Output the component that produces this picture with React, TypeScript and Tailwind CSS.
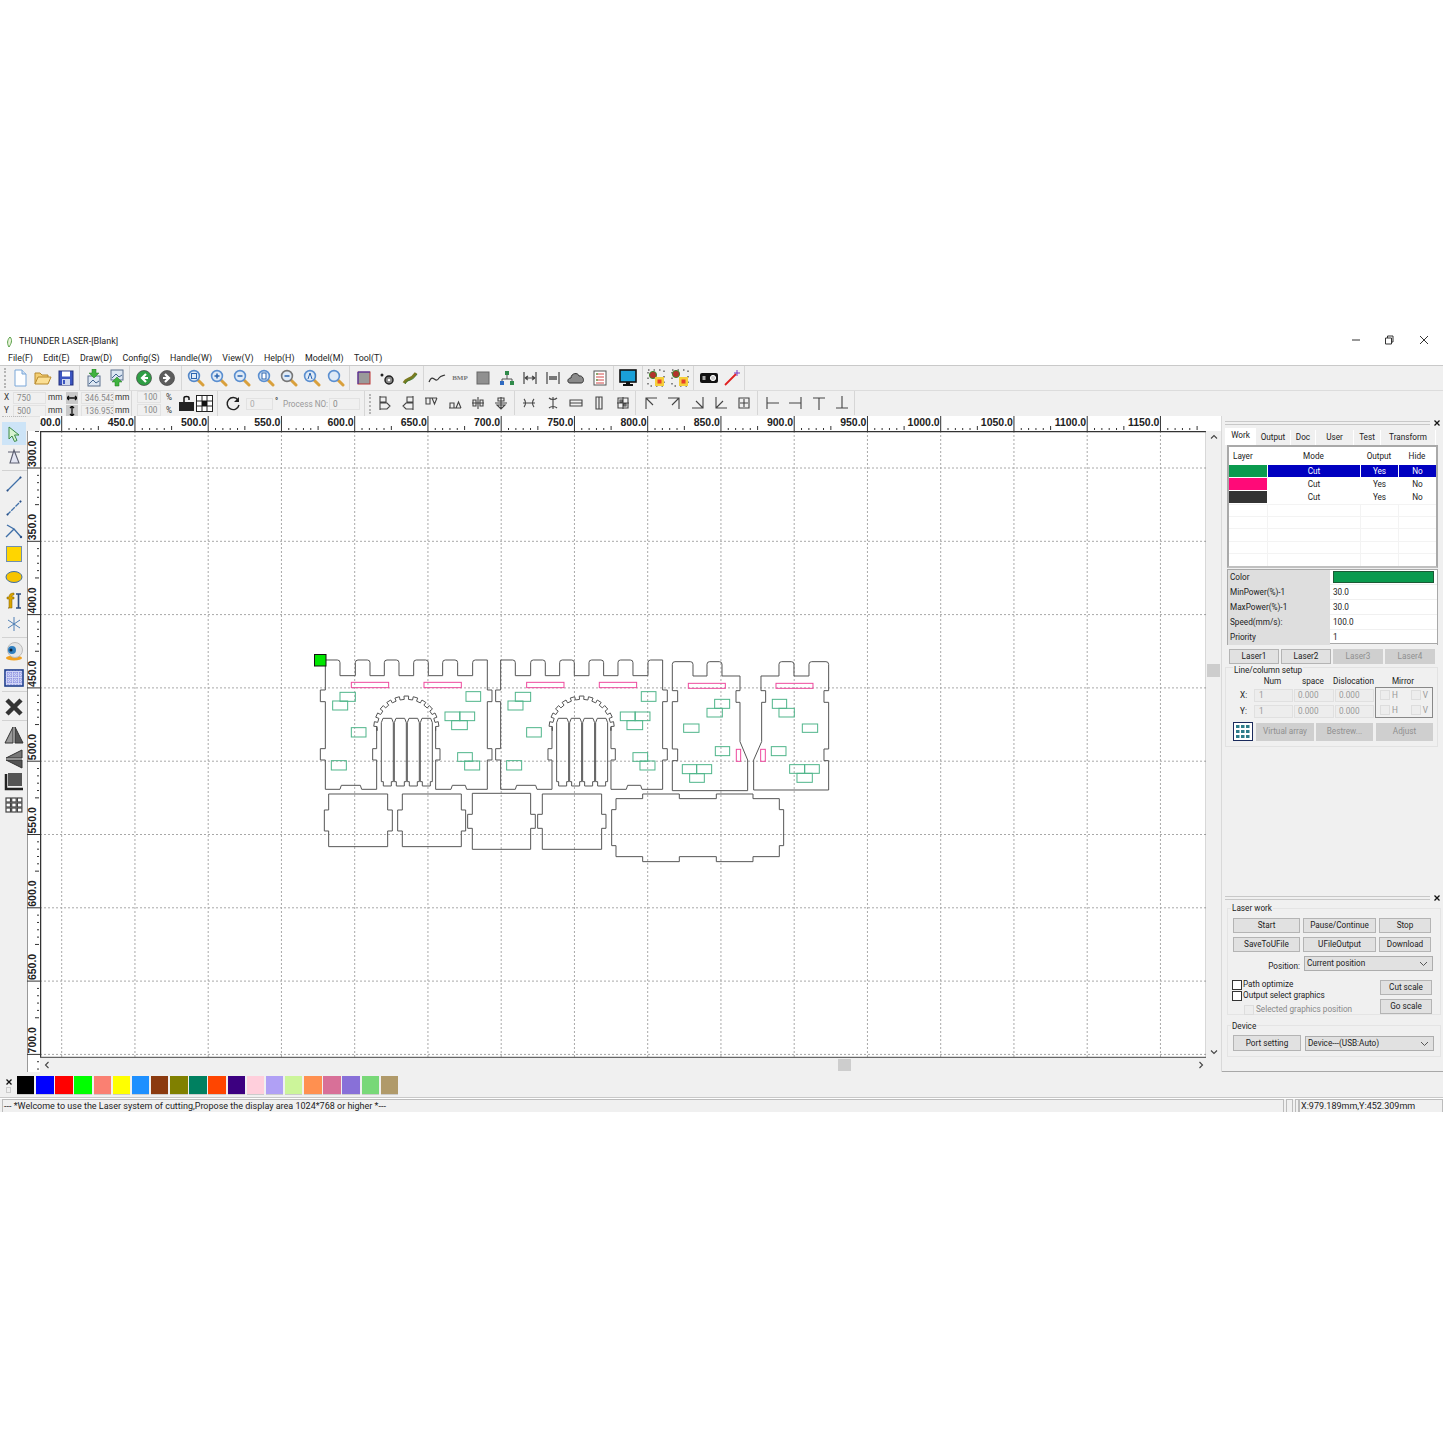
import React from "react";

type P = { children?: React.ReactNode };
const S = ({ children, s = 18 }: P & { s?: number }) => (
  <svg width={s} height={s} viewBox="0 0 18 18" className="block">{children}</svg>
);

const Lens = ({ sym, tint = "#5b8fd0" }: { sym?: React.ReactNode; tint?: string }) => (
  <S>
    <path d="M10.5 10.5 L16 16" stroke="#d9a03c" strokeWidth="3" strokeLinecap="round" />
    <circle cx="7" cy="7" r="5.4" fill="#dfeaf6" stroke={tint} strokeWidth="1.6" />
    {sym}
  </S>
);
const plus = <path d="M4.5 7H9.5M7 4.5V9.5" stroke="#2a64b0" strokeWidth="1.5" />;
const minus = <path d="M4.5 7H9.5" stroke="#2a64b0" strokeWidth="1.5" />;

const ArrowDoc = ({ up }: { up?: boolean }) => (
  <S>
    <rect x="3" y={up ? 1 : 7} width="12" height="10" fill="#dce6f2" stroke="#5a6f8c" />
    <path d={up ? "M4 9 L8 5 L11 8 L14 6" : "M4 15 L8 11 L11 14 L14 12"} stroke="#44658f" fill="none" />
    <path d={up ? "M9 8 L14 13 H11 V17 H7 V13 H4Z" : "M7 0 H11 V4 H14 L9 9 L4 4 H7Z"} fill="#3fb23f" stroke="#1f7a1f" strokeWidth=".5" />
  </S>
);

const Circ = ({ fill, d }: { fill: string; d: string }) => (
  <S>
    <circle cx="9" cy="9" r="7.5" fill={fill} stroke="#444" strokeWidth=".7" />
    <path d={d} stroke="#fff" strokeWidth="2.2" fill="none" />
  </S>
);

const Sparks = ({ flip }: { flip?: boolean }) => (
  <S>
    <rect x="1" y="1" width="16" height="16" fill="none" stroke="#222" strokeDasharray="1.5 4" />
    <circle cx={flip ? 5 : 6} cy={flip ? 5 : 6} r="3.6" fill="#b2332b" stroke="#3c8a2e" />
    <rect x="8" y="8" width="9" height="9" fill="#f5cf3a" />
    <rect x="10.5" y="10.5" width="4" height="4" fill="#e8402a" />
  </S>
);

const line = (d: string, w = 1.3, c = "#444") => (
  <S><path d={d} fill="none" stroke={c} strokeWidth={w} /></S>
);

const tb1: React.ReactNode[][] = [
  [
    <S><path d="M4 1H11L15 5V17H4Z" fill="#fdfeff" stroke="#7aa7d8" /><path d="M11 1V5H15" fill="#cfe0f3" stroke="#7aa7d8" /></S>,
    <S><path d="M1 15V4H6L8 6H14V8" fill="#f4cf74" stroke="#b88a2c" /><path d="M1 15L4 8H17L14 15Z" fill="#fbdf94" stroke="#b88a2c" /></S>,
    <S><rect x="2" y="2" width="14" height="14" fill="#3c55c0" stroke="#22307c" /><rect x="5" y="2.5" width="8" height="5" fill="#fff" /><rect x="5" y="10" width="8" height="6" fill="#cfd8ee" /><rect x="6" y="11" width="2" height="4" fill="#3c55c0" /></S>,
  ],
  [<ArrowDoc />, <ArrowDoc up />],
  [
    <Circ fill="#2f9e44" d="M11 5 L7 9 L11 13 M7 9 H13" />,
    <Circ fill="#5c5c5c" d="M7 5 L11 9 L7 13 M11 9 H5" />,
  ],
  [
    <Lens sym={<rect x="4.5" y="4.5" width="5" height="5" fill="none" stroke="#2a64b0" />} tint="#5588c8" />,
    <Lens sym={plus} />,
    <Lens sym={minus} />,
    <Lens sym={<rect x="5" y="4" width="4" height="6" fill="#fff" stroke="#2a64b0" />} />,
    <Lens sym={minus} tint="#777" />,
    <Lens sym={<path d="M5 10 L7 4 L9 10" stroke="#2a64b0" fill="none" />} />,
    <Lens />,
  ],
  [
    <S><rect x="3" y="3" width="12" height="12" fill="#9a9a9a" stroke="#b33" /><path d="M3 15V3H15" fill="none" stroke="#33b" /></S>,
    <S><circle cx="11" cy="11" r="4" fill="#888" stroke="#222" strokeWidth="1.5" /><circle cx="11" cy="11" r="1.3" fill="#fff" /><circle cx="4" cy="6" r="1.5" fill="#222" /></S>,
    <S><path d="M3 14C6 8 9 13 15 4" stroke="#7a7a20" strokeWidth="3" fill="none" /><path d="M4 15C7 9 10 14 16 5" stroke="#3a7a30" strokeWidth="1" fill="none" /></S>,
  ],
  [
    <S><path d="M1 13C5 3 7 16 11 9 C13 6 15 7 17 6" stroke="#333" strokeWidth="1.2" fill="none" /></S>,
    <span className="font-bold text-[7px] leading-none text-[#777] [font-family:'Liberation_Serif',serif]">BMP</span>,
    <S><rect x="3" y="3" width="12" height="12" fill="#909090" stroke="#666" /></S>,
    <S><path d="M9 5V10M4 13V10H14V13" stroke="#555" fill="none" /><rect x="7" y="2" width="4" height="4" fill="#2f8a4a" /><rect x="2" y="12" width="4" height="4" fill="#2f6ac0" /><rect x="12" y="12" width="4" height="4" fill="#2f8a4a" /></S>,
    line("M3 3V15M15 3V15M4 9H14M4 9L7 7M4 9L7 11M14 9L11 7M14 9L11 11M6 7V11M12 7V11", 1.2),
    <S><path d="M3 3V15M15 3V15" stroke="#444" strokeWidth="1.2" /><rect x="5" y="7" width="8" height="4" fill="#777" /></S>,
    <S><path d="M3 14C0 14 0 9 4 9C4 4 11 3 12 7C17 6 18 14 14 14Z" fill="#8a8a8a" stroke="#333" /></S>,
    <S><rect x="3" y="2" width="12" height="14" fill="#fff" stroke="#555" /><path d="M5 5H13M5 8H13M5 11H13M5 14H13" stroke="#c33" strokeWidth=".9" /><path d="M5 5H7M5 11H7" stroke="#3a3" strokeWidth="1" /></S>,
  ],
  [
    <svg width="20" height="20" viewBox="0 0 20 20" className="block"><rect x="2" y="2" width="16" height="12" fill="#1aa0d8" stroke="#111" strokeWidth="1.6" /><path d="M8 14H12V16H15V18H5V16H8Z" fill="#111" /></svg>,
  ],
  [<Sparks />, <Sparks flip />],
  [
    <svg width="20" height="20" viewBox="0 0 20 20" className="block"><rect x="1" y="5" width="18" height="10" rx="2" fill="#111" /><circle cx="14" cy="10" r="2.6" fill="#ccc" stroke="#fff" /><rect x="3.5" y="8" width="3" height="4" fill="#aaa" /></svg>,
    <S><path d="M2 16L13 5" stroke="#e02020" strokeWidth="1.8" /><path d="M14 1V7M11 4H17" stroke="#7a3ac0" strokeWidth="1" /></S>,
  ],
];

const tb2: string[][] = [
  ["M4 2V16M4 3H10V8H4M4 9H11L14 12L11 15H4", "M14 2V16M14 3H8V8H14M14 9H7L4 12L7 15H14", "M3 4H15M4 4V10H8V4M10 4L12.5 10L15 4", "M3 14H15M4 14V9H8V14M10 14L12.5 8L15 14", "M9 3V15M4 6H7V12H4ZM11 6H14V12H11ZM3 9H15", "M3 9H15M9 3V15M6 4H12V7H6ZM5 11L9 15L13 11Z"],
  ["M3 9H15M4 5C6 7 6 11 4 13M14 5C12 7 12 11 14 13", "M9 3V15M5 4C7 6 11 6 13 4M5 14C7 12 11 12 13 14", "M3 6H15V12H3ZM3 9H15", "M6 3H12V15H6ZM9 3V15", "M4 4H14V14H4ZM9 3V15M3 9H15M6 6H8V8H6ZM10 10H12V12H10Z"],
  ["M4 15V4H15M4 4L11 11M4 4H7M4 4V7", "M14 15V4H3M14 4L7 11M14 4H11M14 4V7", "M14 3V14H3M14 14L7 7M14 14H11M14 14V11", "M4 3V14H15M4 14L11 7M4 14H7M4 14V11", "M4 4H14V14H4ZM9 5V13M5 9H13"],
  ["M4 3V15M4 9H16", "M14 3V15M2 9H14", "M3 4H15M9 4V16", "M3 14H15M9 2V14"],
];

const TbCell = ({ children }: P) => (
  <div className="w-[23.3px] h-[24px] flex items-center justify-center shrink-0">{children}</div>
);
const TbGroup = ({ children, cls }: P & { cls: string }) => (
  <div className={`flex items-center h-[24px] border-r border-[#d6d6d6] ${cls}`}>{children}</div>
);
const Grip = () => <div className="w-[2px] h-[20px] mx-[2px] border-l-2 border-dotted border-[#b5b5b5]" />;

const Box = ({ v, w, cls = "" }: { v: string; w: string; cls?: string }) => (
  <div className={`h-[12px] bg-[#f0f0f0] border border-[#e2e2e2] pl-[3px] leading-[10px] text-[#888] overflow-hidden whitespace-nowrap ${w} ${cls}`}>{v}</div>
);

const Toolbar1 = () => {
  const pads = ["pr-[1px] mr-[2px]", "pr-[1px] mr-[2px]", "pr-[2px] mr-[2px]", "pr-[2px] mr-[2px]", "pr-[1px] mr-[1px]", "pr-[2px] mr-[2px]", "pr-[2px] mr-[2px]", "pr-[2px] mr-[3px]", "pr-0 mr-0"];
  return (
    <div className="h-[25px] flex items-center border-t border-[#c9c9c9] pl-[2px]">
      <Grip />
      {tb1.map((g, i) => (
        <TbGroup key={i} cls={pads[i]}>
          {g.map((c, j) => <TbCell key={j}>{c}</TbCell>)}
        </TbGroup>
      ))}
    </div>
  );
};

const Toolbar2 = () => (
  <div className="h-[26px] flex items-center border-t border-[#dcdcdc] text-[8.2px] text-[#333]">
    <div className="w-[132px] h-full flex flex-col justify-center gap-px pl-[4px] pt-px border-r border-[#d6d6d6] shrink-0">
      {[["X", "750", "346.543"], ["Y", "500", "136.953"]].map((r, i) => (
        <div key={i} className="flex items-center h-[12px]">
          <span className="w-[9px]">{r[0]}</span>
          <Box v={r[1]} w="w-[33px]" />
          <span className="w-[20px] pl-[2px] shrink-0">mm</span>
          <div className="w-[12px] h-[12px] bg-[#c9c9c9] flex items-center justify-center">
            <svg width="10" height="10" viewBox="0 0 10 10"><path d={i ? "M5 0V10M3 2L5 0L7 2M3 8L5 10L7 8" : "M0 5H10M2 3L0 5L2 7M8 3L10 5L8 7"} stroke="#111" strokeWidth="1.3" fill="none" /></svg>
          </div>
          <Box v={r[2]} w="w-[33px]" cls="ml-[3px]" />
          <span className="pl-[1px]">mm</span>
        </div>
      ))}
    </div>
    <div className="w-[86px] h-full flex items-center pl-[5px] border-r border-[#d6d6d6] shrink-0">
      <div className="flex flex-col gap-px">
        {[0, 1].map((i) => (
          <div key={i} className="flex items-center h-[12px]">
            <Box v="100" w="w-[24px]" cls="text-center" />
            <span className="pl-[5px] w-[17px]">%</span>
          </div>
        ))}
      </div>
      <svg width="17" height="17" viewBox="0 0 17 17" className="block"><path d="M6 7V3C6 1 11 1 11 3V5" stroke="#111" strokeWidth="1.5" fill="none" /><rect x="1" y="7" width="15" height="9" fill="#222" /></svg>
      <svg width="17" height="17" viewBox="0 0 17 17" className="ml-px block"><rect x=".5" y=".5" width="16" height="16" fill="#fff" stroke="#222" /><path d="M6 .5V16.5M11 .5V16.5M.5 6H16.5M.5 11H16.5" stroke="#222" /><rect x="6" y="6" width="5" height="5" fill="#111" /></svg>
    </div>
    <div className="h-full flex items-center pl-[7px] w-[147px] border-r border-[#d6d6d6] shrink-0">
      <svg width="16" height="16" viewBox="0 0 16 16" className="block"><path d="M13 4A6 6 0 1 0 14 9" stroke="#222" strokeWidth="1.4" fill="none" /><path d="M14 1V6H9Z" fill="#222" /></svg>
      <Box v="0" w="w-[27px]" cls="ml-[5px] text-[#aaa]" />
      <span className="pl-[2px] w-[10px] pb-[5px] font-bold">°</span>
      <span className="text-[#999] w-[46px] shrink-0 whitespace-nowrap pt-[2px]">Process NO:</span>
      <Box v="0" w="w-[31px]" />
    </div>
    <div className="pl-[2px] flex items-center"><Grip /></div>
    <div className="flex items-center pb-px">
      {tb2.map((g, i) => (
        <TbGroup key={i} cls={i === 3 ? "h-[24px]" : "pr-[1px] mr-[3px]"}>
          {g.map((d, j) => <TbCell key={j}>{line(d, 1.1)}</TbCell>)}
        </TbGroup>
      ))}
    </div>
  </div>
);

const H_TICKS = Array.from({ length: 16 }, (_, i) => ({ x: 61.7 + 73.25 * i, v: 400 + 50 * i }));
const V_TICKS = Array.from({ length: 9 }, (_, i) => ({ y: 468 + 73.3 * i, v: 300 + 50 * i }));
const RULER_FONT = "'Liberation Sans', sans-serif";

const HRuler = () => (
  <svg width="1181" height="15" viewBox="40 416 1181 15" className="block shrink-0">
    <rect x="40" y="416" width="1181" height="15" fill="#fff" />
    {H_TICKS.map((t) => (
      <g key={t.v}>
        <path d={`M${t.x} 416V431`} stroke="#333" />
        <text x={t.x - 1} y="426" textAnchor="end" fontSize="10.5" fontWeight="700" fill="#222" fontFamily={RULER_FONT}>{t.v.toFixed(1)}</text>
        {[1, 2, 3, 4, 5].map((k) => (
          <path key={k} d={`M${t.x + k * 7.33} ${k === 5 ? 426 : 428}V430`} stroke="#333" />
        ))}
      </g>
    ))}
  </svg>
);

const VRuler = () => (
  <svg width="13" height="641" viewBox="27 431 13 641" className="block shrink-0">
    <rect x="27" y="431" width="13" height="641" fill="#fff" />
    <path d="M27.5 431V1072" stroke="#999" />
    {[-1, ...V_TICKS.map((_, i) => i)].map((i) => {
      const y = 468 + 73.3 * i;
      return [1, 2, 3, 4, 5].map((k) => (
        <path key={`${i}-${k}`} d={`M${k === 5 ? 35 : 37} ${y + k * 7.33}H39`} stroke="#333" />
      ));
    })}
    {V_TICKS.map((t) => (
      <g key={t.v}>
        <path d={`M27 ${t.y}H40`} stroke="#333" />
        <text transform={`translate(36 ${t.y - 1}) rotate(-90)`} fontSize="10.5" fontWeight="700" fill="#222" fontFamily={RULER_FONT}>{t.v.toFixed(1)}</text>
      </g>
    ))}
  </svg>
);

const GREEN = "#4fb58a";
const PINK = "#ee4a9e";

const archPath = () => {
  const cx = 289, cy = 236, r1 = 88, r2 = 98;
  const n = 23;
  const a0 = -4, a1 = 184;
  let d = "";
  for (let i = 0; i <= n; i++) {
    const a = ((a0 + ((a1 - a0) * i) / n) * Math.PI) / 180;
    const odd = i % 2 === 1;
    const pts = odd ? [r1, r2] : [r2, r1];
    for (const r of i === 0 ? [r1] : i === n ? [r1] : pts) {
      d += `L${(cx + r * Math.cos(a)).toFixed(1)} ${(cy - r * Math.sin(a)).toFixed(1)}`;
    }
  }
  return d;
};

const WALL = `M46 30H82Q90 30 90 38V77H136V38Q136 30 144 30H172Q180 30 180 38V77H223V38Q223 30 231 30H259Q267 30 267 38V77H311V38Q311 30 319 30H347Q355 30 355 38V77H398V38Q398 30 406 30H435Q443 30 443 38V77H488V38Q488 30 496 30H532V120H546V155H532V296H546V330H532V418H470L466 406H427L423 418H377V330H390V296H377V232${archPath()}L200 232V296H188V330H200V418H155L151 406H94L90 418H46V330H31V296H46V155H31V120H46Z`;

const Bar = ({ x }: { x: number }) => (
  <path d={`M${x} 395V218L${x + 5} 205H${x + 31}L${x + 36} 218V395H${x + 30}V408H${x + 6}V395Z`} />
);

const Rects = ({ list, color }: { list: number[][]; color: string }) => (
  <g stroke={color} fill="none" strokeWidth="3">
    {list.map((r, i) => <rect key={i} x={r[0]} y={r[1]} width={r[2]} height={r[3]} />)}
  </g>
);

const Wall = () => (
  <g>
    <g fill="none" stroke="#555" strokeWidth="3">
      <path d={WALL} />
      {[214, 253, 292, 331].map((x) => <Bar key={x} x={x} />)}
    </g>
    <Rects color={PINK} list={[[124, 97, 112, 16], [342, 97, 112, 16]]} />
    <Rects color={GREEN} list={[[90, 127, 46, 27], [68, 153, 45, 27], [124, 233, 44, 28], [64, 332, 45, 28], [468, 125, 44, 29], [405, 186, 45, 26], [449, 186, 45, 26], [425, 212, 47, 27], [443, 308, 44, 26], [464, 333, 45, 27]]} />
  </g>
);

const Canvas = () => (
  <svg width="1166" height="627" viewBox="40 431 1166 627" className="block shrink-0">
    <rect x="40" y="431" width="1166" height="627" fill="#fff" />
    <g stroke="#a8a8a8" strokeDasharray="2 2">
      {H_TICKS.map((t) => <path key={t.v} d={`M${t.x} 431V1058`} />)}
      {V_TICKS.map((t) => <path key={t.v} d={`M40 ${t.y}H1206`} />)}
    </g>
    <path d="M40.5 1058V431.5H1206" fill="none" stroke="#333" strokeWidth="1.5" />
    <path d="M40 1057.5H1206.5V431" fill="none" stroke="#666" strokeWidth="1.5" />
    <g transform="translate(310 650) scale(0.3333)">
      <Wall />
      <g transform="translate(526 0)"><Wall /></g>
      <g fill="none" stroke="#555" strokeWidth="3">
        <path d="M56 432H233V480H247V543H233V590H56V543H43V480H56Z" />
        <path d="M277 432H454V480H467V543H454V590H277V543H263V480H277Z" />
        <path d="M487 430H662V493H676V535H662V598H487V535H473V493H487Z" />
        <path d="M697 432H875V493H888V535H875V598H697V535H683V493H697Z" />
      </g>
    </g>
    <g transform="translate(600 650) scale(0.3333)">
      <g fill="none" stroke="#555" strokeWidth="3">
        <path d="M48 446H128V432H238V446H349V432H459V446H538V479H551V587H538V620H459V635H349V620H238V635H128V620H48V587H35V479H48Z" />
        <path d="M225 35H271Q279 35 279 43V78H321V43Q321 35 329 35H358Q366 35 366 43V78H420V122H408V157H420V275L443 330V422H217V332H233V297H217V155H233V122H217V43Q217 35 225 35Z" />
        <path d="M483 78H537V43Q537 35 545 35H574Q582 35 582 43V78H627V43Q627 35 635 35H678Q686 35 686 43V122H672V157H686V297H672V332H686V420H461V330L485 275V157H497V122H483Z" />
      </g>
      <Rects color={PINK} list={[[265, 100, 111, 15], [409, 298, 13, 36], [528, 100, 111, 15], [482, 298, 14, 36]]} />
      <Rects color={GREEN} list={[[344, 148, 45, 27], [321, 175, 46, 26], [251, 222, 46, 25], [346, 290, 43, 27], [247, 344, 43, 27], [290, 344, 45, 27], [269, 371, 44, 26], [517, 148, 43, 27], [537, 175, 46, 26], [607, 222, 46, 25], [514, 290, 44, 27], [569, 344, 45, 26], [614, 344, 44, 26], [591, 370, 46, 27]]} />
    </g>
    <rect x="314.5" y="654.5" width="11.5" height="11.5" fill="#00e600" stroke="#111" />
  </svg>
);

const leftIcons: { el: React.ReactNode; cls?: string; active?: boolean }[] = [
  { active: true, el: <S><path d="M4 2L14 10H9.5L12 15.5L9.5 16.5L7 11L4 14Z" fill="#d8f3d0" stroke="#3a8a45" /></S> },
  { cls: "border-b border-[#d2d2d2] mb-[2px] pb-[1px]", el: <S><path d="M3 4H15M9 2L5 15H14Z" fill="#e3e5f2" stroke="#5c5f70" strokeWidth="1.1" /></S> },
  { el: <S><path d="M2 16L16 2" stroke="#3f6fa8" strokeWidth="1.3" /><circle cx="2.5" cy="15.5" r="1" fill="#2a4f86" /><circle cx="15.5" cy="2.5" r="1" fill="#2a4f86" /></S> },
  { el: <S><path d="M2 16L16 2" stroke="#3f6fa8" strokeWidth="1.3" strokeDasharray="5 1" /><circle cx="2.5" cy="15.5" r="1" fill="#2a4f86" /><circle cx="15.5" cy="2.5" r="1" fill="#2a4f86" /></S> },
  { el: <S><path d="M1 15L9 7L16 15M2 3L9 7" stroke="#3f6fa8" strokeWidth="1.4" fill="none" /><circle cx="16" cy="15" r="1.2" fill="#2a4f86" /></S> },
  { el: <S><rect x="1.5" y="1.5" width="15" height="15" fill="#ffd500" stroke="#6f8fb0" /></S> },
  { el: <S><ellipse cx="9" cy="9" rx="8" ry="5.5" fill="#f6c400" stroke="#3f6fa8" /></S> },
  { el: <S><path d="M3 16H7V7H9V5H7C7 3 8 3 9 3V1C5 1 4 3 4 5H2V7H4V16Z" fill="#d9a400" stroke="#7a5a00" strokeWidth=".5" /><path d="M11 2H16M13.5 2V16M11 16H16" stroke="#2b4c80" strokeWidth="1.6" /></S> },
  { cls: "border-b border-[#d2d2d2] mb-[2px] pb-[1px]", el: <S><path d="M9 2V16M3 5L15 13M15 5L3 13" stroke="#4e7fb5" strokeWidth="1" /></S> },
  { cls: "mb-[3px]", el: <svg width="20" height="20" viewBox="0 0 20 20" className="block"><ellipse cx="10" cy="17" rx="8" ry="2.5" fill="#f0a020" /><circle cx="11" cy="9" r="7.5" fill="#e5e5e5" stroke="#bbb" /><circle cx="8" cy="9" r="4" fill="#2f7fc0" /><circle cx="7" cy="9" r="1.5" fill="#123" /></svg> },
  { cls: "border-b border-[#d2d2d2] mb-[3px] pb-[2px]", el: <svg width="20" height="20" viewBox="0 0 20 20" className="block"><rect x="1" y="2" width="18" height="16" fill="#cfd4f5" stroke="#1f3f8c" strokeWidth="1.6" /><path d="M4 2V18M7 2V18M10 2V18M13 2V18M16 2V18M1 5H19M1 8H19M1 11H19M1 14H19" stroke="#6a70d8" strokeWidth=".8" strokeDasharray="1 1" /></svg> },
  { cls: "border-b border-[#d2d2d2] mb-[3px] pb-[1px]", el: <svg width="20" height="20" viewBox="0 0 20 20" className="block"><path d="M3 3L17 17M17 3L3 17" stroke="#333" strokeWidth="4.5" /></svg> },
  { el: <svg width="20" height="20" viewBox="0 0 20 20" className="block"><path d="M9 2V18H1Z" fill="#999" stroke="#333" /><path d="M11 2V18H19Z" fill="#555" stroke="#333" /></svg> },
  { el: <svg width="20" height="20" viewBox="0 0 20 20" className="block"><path d="M18 1V9H2Z" fill="#777" stroke="#333" /><path d="M18 19V11H2Z" fill="#555" stroke="#333" /></svg> },
  { el: <svg width="20" height="20" viewBox="0 0 20 20" className="block"><rect x="4" y="1" width="14" height="13" fill="#555" /><path d="M2 2V17H19" stroke="#222" strokeWidth="2.5" fill="none" /></svg> },
  { el: <svg width="20" height="20" viewBox="0 0 20 20" className="block"><g fill="#fff" stroke="#444" strokeWidth="1.2"><rect x="2" y="3" width="4.5" height="4" /><rect x="7.7" y="3" width="4.5" height="4" /><rect x="13.4" y="3" width="4.5" height="4" /><rect x="2" y="8" width="4.5" height="4" /><rect x="7.7" y="8" width="4.5" height="4" /><rect x="13.4" y="8" width="4.5" height="4" /><rect x="2" y="13" width="4.5" height="4" /><rect x="7.7" y="13" width="4.5" height="4" /><rect x="13.4" y="13" width="4.5" height="4" /></g></svg> },
];

const LeftBar = () => (
  <div className="w-[27px] shrink-0 pl-[2px]">
    <div className="w-[24px] h-[6px] border-t border-dotted border-[#bbb]" />
    {leftIcons.map((it, i) => (
      <div key={i} className={it.cls ?? ""}>
        <div className={`w-[24px] h-[23.3px] flex items-center justify-center ${it.active ? "bg-[#cde4f7]" : ""}`}>{it.el}</div>
      </div>
    ))}
  </div>
);

const Chev = ({ d }: { d: string }) => (
  <svg width="8" height="8" viewBox="0 0 8 8" className="block shrink-0"><path d={d} stroke="#444" strokeWidth="1.1" fill="none" /></svg>
);

const Btn = ({ children, cls = "", off }: P & { cls?: string; off?: boolean }) => (
  <div className={`flex items-center justify-center border whitespace-nowrap ${off ? "bg-[#cfcfcf] border-[#cfcfcf] text-[#8f8f8f]" : "bg-[#e1e1e1] border-[#b4b4b4] text-[#222]"} ${cls}`}>{children}</div>
);

const Select = ({ v, cls = "" }: { v: string; cls?: string }) => (
  <div className={`bg-[#e1e1e1] border border-[#adadad] flex items-center justify-between pl-[2px] pr-[4px] ${cls}`}>
    <span>{v}</span>
    <svg width="9" height="6" viewBox="0 0 9 6" className="block"><path d="M1 1L4.5 4.5L8 1" stroke="#555" fill="none" /></svg>
  </div>
);

const Check = ({ off }: { off?: boolean }) => (
  <div className={`w-[10px] h-[10px] shrink-0 border ${off ? "bg-[#ededed] border-[#ddd]" : "bg-white border-[#333]"}`} />
);

const PanelGrip = () => (
  <div className="h-[9px] flex items-center justify-between pl-[3px] pr-[3px]">
    <div className="flex-1 h-[4px] border-y border-[#c8c8c8] mr-[4px]" />
    <svg width="6" height="6" viewBox="0 0 6 6" className="block"><path d="M.5 .5L5.5 5.5M5.5 .5L.5 5.5" stroke="#111" strokeWidth="1.3" /></svg>
  </div>
);

const tabs: [string, string][] = [["Work", "w-[31px]"], ["Output", "w-[35px]"], ["Doc", "w-[25px]"], ["User", "w-[38px]"], ["Test", "w-[27px]"], ["Transform", "w-[55px]"]];

const layerRows: [string, boolean][] = [["#0a9a4e", true], ["#ff0a78", false], ["#333333", false]];
const cols = "grid grid-cols-[38px_93px_38px_38px]";

const WorkPanel = () => (
  <div className="h-[477px] shrink-0">
    <div className="pt-[2px]"><PanelGrip /></div>
    <div className="flex items-end h-[16px] pl-[3px] mt-[2px]">
      {tabs.map(([t, w], i) => (
        <div key={t} className={`${w} flex items-center justify-center ${i === 0 ? "bg-white h-[17px] pb-[3px]" : "h-[15px] bg-[#f0f0f0] border-r border-white"}`}>{t}</div>
      ))}
    </div>
    <div className="ml-[5px] w-[211px] h-[123px] bg-white border-2 border-[#a9a9a9] border-b-[#c0c0c0]">
      <div className={`${cols} h-[18px] items-center text-center`}>
        <div className="text-left pl-[4px]">Layer</div><div>Mode</div><div>Output</div><div>Hide</div>
      </div>
      {layerRows.map(([c, sel], i) => (
        <div key={i} className={`${cols} h-[12.9px] items-center text-center leading-none ${sel ? "text-white" : ""}`}>
          <div className="h-[12px]" style={{ backgroundColor: c }} />
          <div className={`h-[12px] ml-[1px] flex items-center justify-center ${sel ? "bg-[#0000c0]" : ""}`}>Cut</div>
          <div className={`h-[12px] ml-[1px] flex items-center justify-center ${sel ? "bg-[#0000c0]" : ""}`}>Yes</div>
          <div className={`h-[12px] ml-[1px] flex items-center justify-center ${sel ? "bg-[#0000c0]" : ""}`}>No</div>
        </div>
      ))}
      {[0, 1, 2, 3, 4].map((i) => (
        <div key={i} className={`${cols} h-[12.4px] border-t border-[#f3f3f3]`}>
          <div /><div className="border-l border-[#f3f3f3]" /><div className="border-l border-[#f3f3f3]" /><div className="border-l border-[#f3f3f3]" />
        </div>
      ))}
    </div>
    <div className="ml-[5px] w-[211px] h-[76px] mt-px bg-white border border-[#a9a9a9] border-b-2">
      {[["Color", ""], ["MinPower(%)-1", "30.0"], ["MaxPower(%)-1", "30.0"], ["Speed(mm/s):", "100.0"], ["Priority", "1"]].map(([l, v], i) => (
        <div key={l} className="grid grid-cols-[102px_1fr] h-[15px] items-center">
          <div className="bg-[#dedede] h-full pl-[2px] flex items-center">{l}</div>
          <div className={`pl-[3px] h-full flex items-center border-b border-[#f0f0f0] ${i === 0 ? "" : "pt-px"}`}>
            {i === 0 ? <div className="w-[101px] h-[12px] bg-[#0a9a4e] border border-[#1c5a36]" /> : v}
          </div>
        </div>
      ))}
    </div>
    <div className="flex gap-[2px] ml-[7px] mt-[4px]">
      {["Laser1", "Laser2", "Laser3", "Laser4"].map((l, i) => (
        <Btn key={l} off={i > 1} cls="w-[50px] h-[15px]">{l}</Btn>
      ))}
    </div>
    <div className="relative ml-[3px] w-[213px] h-[80px] mt-[3px] border border-[#e2e2e2]">
      <div className="absolute -top-[3px] left-[7px] bg-[#f0f0f0] px-px leading-[10px]">Line/column setup</div>
      <div className="flex pt-[8px] h-[19px] items-center text-center">
        <div className="w-[26px]" />
        <div className="w-[41px]">Num</div><div className="w-[40px]">space</div><div className="w-[41px]">Dislocation</div><div className="w-[58px]">Mirror</div>
      </div>
      <div className="flex">
        <div className="flex flex-col gap-[3px] pt-[2px]">
          {[["X:"], ["Y:"]].map(([a]) => (
            <div key={a} className="flex items-center h-[13px]">
              <span className="w-[28px] pl-[14px]">{a}</span>
              <div className="flex gap-[1px] text-[#999]">
                <div className="w-[39px] h-[13px] bg-[#ededed] border border-[#e0e0e0] pl-[4px] leading-[11px]">1</div>
                <div className="w-[40px] h-[13px] bg-[#ededed] border border-[#e0e0e0] pl-[3px] leading-[11px]">0.000</div>
                <div className="w-[39px] h-[13px] bg-[#ededed] border border-[#e0e0e0] pl-[3px] leading-[11px]">0.000</div>
              </div>
            </div>
          ))}
        </div>
        <div className="ml-px w-[58px] h-[31px] border border-[#888] flex flex-col justify-around px-[4px] text-[#999]">
          {[0, 1].map((i) => (
            <div key={i} className="flex items-center">
              <Check off /><span className="pl-[2px] w-[14px]">H</span><div className="ml-[8px]"><Check off /></div><span className="pl-[2px]">V</span>
            </div>
          ))}
        </div>
      </div>
      <div className="flex gap-[2px] items-center pl-[7px] mt-[4px]">
        <svg width="20" height="19" viewBox="0 0 20 19" className="block mr-[1px]"><rect x=".5" y=".5" width="19" height="18" fill="#fff" stroke="#1a2a5c" /><g fill="#2e7d8a"><rect x="3" y="3" width="3.5" height="3" /><rect x="8" y="3" width="3.5" height="3" /><rect x="13" y="3" width="3.5" height="3" /><rect x="3" y="8" width="3.5" height="3" /><rect x="8" y="8" width="3.5" height="3" /><rect x="13" y="8" width="3.5" height="3" /><rect x="3" y="13" width="3.5" height="3" /><rect x="8" y="13" width="3.5" height="3" /><rect x="13" y="13" width="3.5" height="3" /></g></svg>
        <Btn off cls="w-[58px] h-[18px]">Virtual array</Btn>
        <Btn off cls="w-[57px] h-[18px]">Bestrew...</Btn>
        <Btn off cls="w-[57px] h-[18px] ml-px">Adjust</Btn>
      </div>
    </div>
  </div>
);

const LaserPanel = () => (
  <div className="flex-1 border-b border-[#a8a8a8]">
    <PanelGrip />
    <div className="relative ml-[5px] w-[214px] h-[107px] mt-[6px] border border-[#e4e4e4] pt-[9px] pl-[5px]">
      <div className="absolute -top-[6px] left-[3px] bg-[#f0f0f0] px-px leading-[11px]">Laser work</div>
      <div className="flex flex-col gap-[4px]">
        {[["Start", "Pause/Continue", "Stop"], ["SaveToUFile", "UFileOutput", "Download"]].map((r) => (
          <div key={r[0]} className="flex gap-[3px]">
            <Btn cls="w-[67px] h-[15px]">{r[0]}</Btn>
            <Btn cls="w-[73px] h-[15px]">{r[1]}</Btn>
            <Btn cls="w-[52px] h-[15px]">{r[2]}</Btn>
          </div>
        ))}
      </div>
      <div className="flex items-center mt-[4px] h-[15px]">
        <span className="w-[67px] text-right pt-[5px]">Position:</span>
        <Select v="Current position" cls="ml-[4px] w-[129px] h-[15px]" />
      </div>
      <div className="flex mt-[8px] justify-between pr-[8px]">
        <div className="-ml-px">
          <div className="flex items-center gap-px h-[11px]"><Check /><span>Path optimize</span></div>
          <div className="flex items-center gap-px h-[11px]"><Check /><span>Output select graphics</span></div>
          <div className="flex items-center gap-px h-[14px] pl-[12px] pt-[3px] text-[#888]"><Check off /><span className="pl-[1px]">Selected graphics position</span></div>
        </div>
        <div className="flex flex-col gap-[4px] mt-px">
          <Btn cls="w-[52px] h-[15px]">Cut scale</Btn>
          <Btn cls="w-[52px] h-[15px]">Go scale</Btn>
        </div>
      </div>
    </div>
    <div className="relative ml-[5px] w-[214px] h-[32px] mt-[10px] border border-[#e4e4e4] pt-[9px] pl-[5px] flex gap-[3px]">
      <div className="absolute -top-[5px] left-[3px] bg-[#f0f0f0] px-px leading-[11px]">Device</div>
      <Btn cls="w-[68px] h-[16px]">Port setting</Btn>
      <Select v="Device---(USB:Auto)" cls="ml-px mt-[1px] w-[129px] h-[15px]" />
    </div>
  </div>
);

const palette = ["#000000", "#0000ff", "#ff0000", "#00ff00", "#fa8072", "#ffff00", "#1e90ff", "#8b3a0f", "#808000", "#008060", "#ff4500", "#3c0080", "#ffcfdc", "#b0a0f5", "#ccf59a", "#ff9050", "#d87098", "#8870d8", "#78d878", "#b09a6a"];

export default function App() {
  return (
    <div className="w-[1445px] h-[1445px] bg-white overflow-hidden text-[9px] text-[#222] [font-family:Roboto,sans-serif]">
      <div className="h-[333px]" />
      <div className="w-[1443px] h-[779px] bg-[#f0f0f0] flex flex-col">
        <div className="h-[17px] bg-white flex items-center pl-[5px] pr-[14px] shrink-0">
          <svg width="10" height="12" viewBox="0 0 10 12" className="block"><path d="M5 1C2 4 2 8 4 11C6 8 8 4 5 1Z" fill="#e8f4d8" stroke="#5aa04a" /></svg>
          <span className="pl-[4px] pt-[1px] text-[9px]">THUNDER LASER-[Blank]</span>
          <div className="ml-auto flex items-center gap-[23px] pb-[3px]">
            <svg width="10" height="10" viewBox="0 0 10 10" className="block"><path d="M1 5H9" stroke="#333" /></svg>
            <svg width="10" height="10" viewBox="0 0 10 10" className="block"><path d="M1.5 3H7.5V9H1.5ZM3.5 3V1H9V7H7.5" stroke="#333" fill="none" /></svg>
            <svg width="10" height="10" viewBox="0 0 10 10" className="block ml-[2px]"><path d="M1 1L9 9M9 1L1 9" stroke="#333" /></svg>
          </div>
        </div>
        <div className="h-[15px] bg-white flex items-center pl-[8px] gap-[10.4px] pt-[2px] text-[8.9px] shrink-0">
          {["File(F)", "Edit(E)", "Draw(D)", "Config(S)", "Handle(W)", "View(V)", "Help(H)", "Model(M)", "Tool(T)"].map((m) => <span key={m}>{m}</span>)}
        </div>
        <Toolbar1 />
        <Toolbar2 />
        <div className="h-[656px] flex shrink-0">
          <div className="w-[1221px] shrink-0 flex">
            <LeftBar />
            <div className="w-[1194px] shrink-0">
              <div className="flex h-[15px]">
                <div className="w-[13px] shrink-0" />
                <HRuler />
              </div>
              <div className="flex h-[641px]">
                <VRuler />
                <div className="w-[1181px]">
                  <div className="flex h-[627px]">
                    <Canvas />
                    <div className="w-[15px] flex flex-col items-center py-[2px]">
                      <Chev d="M1 5.5L4 2.5L7 5.5" />
                      <div className="w-[13px] h-[13px] bg-[#cdcdcd] mt-[223px]" />
                      <div className="mt-auto"><Chev d="M1 2.5L4 5.5L7 2.5" /></div>
                    </div>
                  </div>
                  <div className="h-[14px] flex items-center px-[3px]">
                    <Chev d="M5.5 1L2.5 4L5.5 7" />
                    <div className="w-[13px] h-[12px] bg-[#cdcdcd] ml-[787px]" />
                    <div className="ml-auto pr-[13px]"><Chev d="M2.5 1L5.5 4L2.5 7" /></div>
                  </div>
                </div>
              </div>
            </div>
          </div>
          <div className="w-[222px] shrink-0 flex flex-col border-l border-[#d9d9d9] text-[8.2px]">
            <WorkPanel />
            <LaserPanel />
          </div>
        </div>
        <div className="h-[26px] flex items-center shrink-0 border-b border-[#c8c8c8] pt-[2px]">
          <div className="w-[17px] flex flex-col items-center gap-[2px] pt-[1px]">
            <svg width="6" height="6" viewBox="0 0 6 6" className="block"><path d="M.5 .5L5.5 5.5M5.5 .5L.5 5.5" stroke="#111" strokeWidth="1.3" /></svg>
            <div className="w-[5px] h-[6px] border border-[#ccc]" />
          </div>
          <div className="flex gap-[1.75px]">
            {palette.map((c) => <div key={c} className="w-[17.4px] h-[19px] border-b border-[#ccc]" style={{ backgroundColor: c }} />)}
          </div>
        </div>
        <div className="flex-1 flex border-t border-[#fff]">
          <div className="w-[1282px] ml-[2px] border border-[#bcbcbc] border-b-0 pl-[1px] leading-[12px] whitespace-nowrap">--- *Welcome to use the Laser system of cutting,Propose the display area 1024*768 or higher *---</div>
          <div className="w-[7px] ml-[2px] border border-[#bcbcbc] border-b-0" />
          <div className="w-[4px] ml-[2px] border border-[#bcbcbc] border-b-0" />
          <div className="flex-1 border border-[#bcbcbc] border-b-0 pl-[1px] leading-[12px] whitespace-nowrap">X:979.189mm,Y:452.309mm</div>
        </div>
      </div>
    </div>
  );
}
